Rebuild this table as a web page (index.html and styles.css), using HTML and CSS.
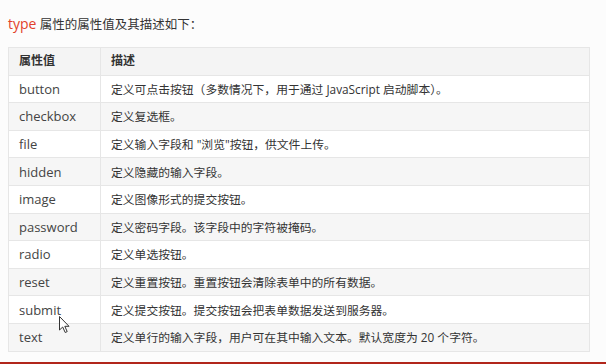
FILE: index.html
```html
<!DOCTYPE html>
<html lang="zh">
<head>
<meta charset="utf-8">
<link rel="stylesheet" href="styles.css">
</head>
<body>
<div class="page">
  <p class="intro"><span class="kw">type</span> 属性的属性值及其描述如下：</p>
  <table class="attrs">
    <thead>
      <tr><th class="c1">属性值</th><th>描述</th></tr>
    </thead>
    <tbody>
      <tr><td class="c1">button</td><td>定义可点击按钮（多数情况下，用于通过 JavaScript 启动脚本）。</td></tr>
      <tr><td class="c1">checkbox</td><td>定义复选框。</td></tr>
      <tr><td class="c1">file</td><td>定义输入字段和 "浏览"按钮，供文件上传。</td></tr>
      <tr><td class="c1">hidden</td><td>定义隐藏的输入字段。</td></tr>
      <tr><td class="c1">image</td><td>定义图像形式的提交按钮。</td></tr>
      <tr><td class="c1">password</td><td>定义密码字段。该字段中的字符被掩码。</td></tr>
      <tr><td class="c1">radio</td><td>定义单选按钮。</td></tr>
      <tr><td class="c1">reset</td><td>定义重置按钮。重置按钮会清除表单中的所有数据。</td></tr>
      <tr><td class="c1">submit</td><td>定义提交按钮。提交按钮会把表单数据发送到服务器。</td></tr>
      <tr><td class="c1">text</td><td>定义单行的输入字段，用户可在其中输入文本。默认宽度为 20 个字符。</td></tr>
    </tbody>
  </table>
</div>
<svg class="cursor" width="12" height="18" viewBox="0 0 12 18"><path d="M0.5 0.5 L0.5 14 L3.7 11 L6.2 16.5 L8.2 15.6 L5.8 10.3 L10 10.3 Z" fill="#fff" stroke="#333" stroke-width="1"/></svg>
<div class="bar"></div>
</body>
</html>
```
FILE: styles.css
```css
html, body {
  margin: 0;
  padding: 0;
  background: #fcfcfc;
  height: 364px;
  overflow: hidden;
}
body {
  position: relative;
  font-family: "Open Sans", "Noto Sans CJK SC", sans-serif;
  color: #333;
}
.page {
  padding: 14px 16px 0 8px;
}
.intro {
  margin: 0 0 12px 0;
  font-size: 12.5px;
  line-height: 20px;
  color: #333;
}
.kw {
  color: #e2412b;
  font-size: 14px;
}
.attrs {
  width: 582px;
  border-collapse: collapse;
  font-size: 12px;
}
.attrs th, .attrs td {
  border: 1px solid #e6e6e6;
  height: 26.6px;
  padding: 0 10px;
  text-align: left;
  font-weight: normal;
  line-height: 16px;
}
.attrs tr {
  height: 27.6px;
}
.attrs th {
  font-weight: bold;
  font-size: 12px;
  background: #f4f4f4;
}
.attrs td {
  font-size: 11.8px;
}
.attrs td.c1 {
  font-size: 13px;
  color: #444;
}
.attrs .c1 {
  width: 71px;
}
.attrs tbody tr:nth-child(odd) {
  background: #fff;
}
.attrs tbody tr:nth-child(even) {
  background: #f6f6f6;
}
.cursor {
  position: absolute;
  left: 59px;
  top: 316px;
}
.bar {
  position: absolute;
  left: 0;
  right: 0;
  bottom: 0;
  height: 2px;
  background: #b1261b;
}
```
